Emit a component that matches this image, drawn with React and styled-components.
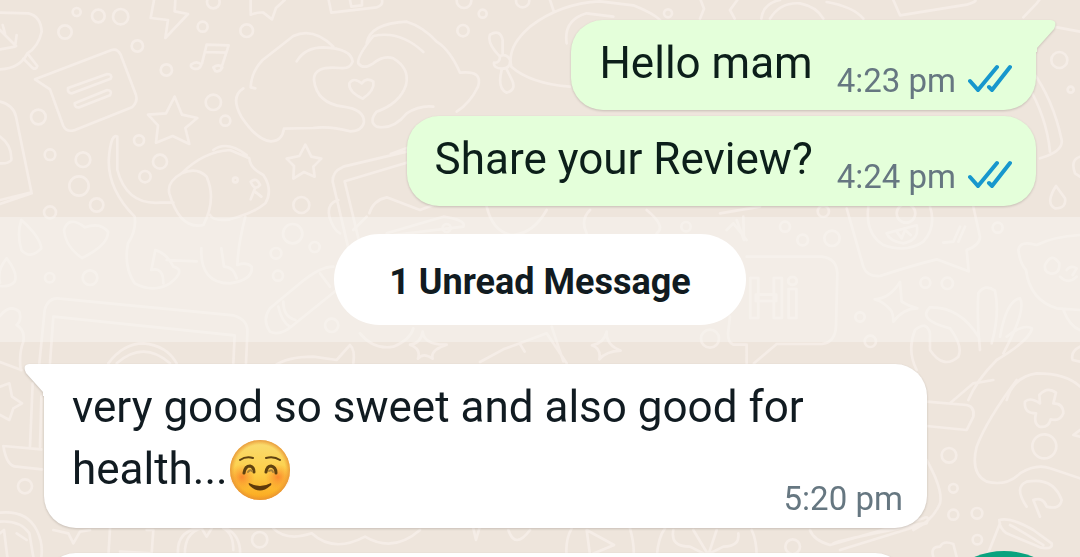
import styled, { createGlobalStyle, css } from 'styled-components';

const dots = [
  [230, 36, 12], [295, 48, 19], [362, 50, 23], [195, 96, 20], [412, 138, 17], [608, 80, 15],
  [740, 92, 19], [640, 6, 19], [499, 210, 17], [640, 307, 23], [676, 362, 15], [115, 351, 22],
  [417, 421, 15], [480, 485, 21], [435, 530, 17], [150, 464, 16], [249, 479, 22], [237, 558, 29],
  [290, 615, 20], [150, 637, 18], [904, 615, 24], [706, 540, 7], [1389, 92, 17], [1448, 41, 12],
  [1392, 2, 22], [1568, 2, 20], [2004, 40, 12], [3178, 180, 24], [3212, 269, 9], [2470, 634, 17],
  [878, 701, 29], [944, 741, 15], [828, 760, 16], [834, 827, 15], [149, 833, 14], [270, 833, 22],
  [995, 976, 20], [2355, 680, 15], [2408, 720, 16], [2496, 715, 23], [2993, 683, 15],
  [2776, 848, 15], [2842, 850, 17], [2580, 951, 14], [2611, 1024, 17], [75, 1459, 21],
  [2847, 1366, 22], [2860, 1465, 13], [2860, 1544, 15], [2931, 1540, 16], [2932, 1619, 14],
  [2378, 1640, 22], [779, 1619, 23], [3133, 1339, 36], [2130, 1016, 27], [1340, 684, 12],
  [2058, 680, 14], [2718, 640, 28],
];

const doodles = [
  // leaf, speech note, note card
  'M0 38 L85 40 Q122 48 125 95 Q115 140 82 160 Q60 205 0 208 M82 160 L112 198 Q108 210 98 204 L70 176 M0 90 L48 138 M8 75 L15 100 M50 105 L45 140 L0 148',
  'M105 238 L335 150 Q352 144 362 164 L408 285 Q414 306 396 322 L225 390 Q200 398 190 378 L150 268 Z M204 264 L322 222 Q338 222 332 236 L216 280 Q202 280 204 264 M224 310 L322 270 Q338 272 330 286 L238 322 Q224 324 224 310',
  'M0 305 Q40 315 48 350 L95 580 L0 612 M0 600 L92 578 M0 410 Q36 435 34 480 Q24 492 0 490',
  // lightning, notes, stars
  'M462 0 L452 54 L504 60 L496 114 L564 42 L524 34 L526 0',
  'M606 190 L620 134 L686 136 L664 204 M614 156 L678 158 M573 194 Q590 180 604 194 Q598 210 582 206 Q570 202 573 194 M640 202 Q656 190 667 202 Q660 218 646 213 Z',
  'M524 290 L546 344 L592 354 L556 384 L568 432 L518 408 L468 428 L474 376 L444 344 L498 340 Z',
  'M752 0 L752 44 Q776 36 790 38 L816 58 L828 24 L854 0',
  'M916 434 L934 470 L964 476 L940 500 L944 530 L912 516 L880 536 L882 498 L860 476 L898 468 Z',
  // hands holding a heart
  'M766 265 L752 262 Q754 215 788 180 L880 108 Q940 80 1000 140 M890 184 Q915 142 970 142 Q1054 145 1058 185 Q1050 208 1020 204 Q940 196 942 240 Q950 310 1030 320 Q1092 328 1092 366 Q1086 394 1050 394 Q990 378 940 384 L852 386 Q846 425 812 424 Q770 420 724 350 Q690 290 730 265',
  'M1100 130 Q1110 70 1220 65 Q1270 80 1310 125 Q1350 150 1380 218 Q1450 210 1434 260 Q1410 310 1370 335 M1270 156 Q1200 90 1120 108 Q1070 170 1075 190 Q1090 210 1120 190 Q1150 165 1180 175 Q1230 205 1218 255 Q1200 310 1130 335 Q1105 365 1130 380 Q1180 390 1220 340 Q1260 315 1300 320 M1085 250 Q1060 230 1048 250 Q1045 275 1088 296 Q1125 270 1120 245 Q1100 230 1085 250',
  'M986 0 L994 38 L1130 22 Q1150 15 1146 0 M1050 0 L1054 20 L1086 16 L1086 0',
  // balloon and whistle
  'M1710 260 Q1590 250 1534 200 Q1520 140 1590 80 Q1680 10 1800 4 L1900 16 Q1960 40 1980 60 M1700 130 Q1690 60 1760 40 L1840 50 M1650 0 L1662 36 M1500 168 Q1520 160 1530 180 Q1532 206 1506 206 Q1480 205 1482 188 Q1500 190 1500 168 M1500 170 Q1460 130 1470 104 Q1500 86 1508 120 L1508 166 M1506 206 Q1490 265 1520 278 Q1550 270 1536 240 L1518 204',
  'M2100 56 L2112 26 L2102 0 M2204 56 L2190 30 L2212 0 M2284 56 Q2290 10 2340 0 M2310 56 Q2340 6 2400 10 Q2450 20 2470 56 M2480 6 Q2560 20 2590 56 M2680 0 L2700 46 L2900 14 Q2930 5 2926 0 M3070 52 L3110 10 L3118 0',
  // dog
  'M352 410 Q335 400 328 460 Q315 560 404 650 Q410 690 384 730 Q370 800 404 850 Q460 880 510 850 Q560 810 520 800 Q500 760 466 750 L454 810 Q490 800 490 850 M352 410 L352 510 Q380 615 480 608 L520 608 M545 520 Q610 455 690 450 L748 475 Q750 505 790 525 Q820 570 796 610 Q760 640 690 658 Q640 665 630 645 M640 450 Q680 420 740 465 M545 520 Q500 545 508 580 Q540 690 610 675 Q650 600 620 530 Q590 500 545 520 M500 780 L590 784 M604 745 Q600 850 690 850 Q760 840 755 800 Q740 785 712 795 Q715 730 736 650 M664 745 L672 800 Q700 800 710 835 M752 545 Q770 530 780 555 Q765 575 752 545 M765 565 L752 598 M765 575 L784 590',
  // tablet
  'M1300 415 L1172 462 M1220 455 L1030 500 Q996 515 998 545 L1044 740 M1240 482 L1034 544 L1080 735 M1015 600 Q980 610 988 650 Q1000 690 1020 700 M1108 640 Q1120 600 1160 592 L1260 630 L1365 590',
  'M1060 690 L1100 650 M1160 700 L1330 650 Q1400 660 1390 680 L1180 705 M1460 620 Q1480 700 1540 705 Q1600 700 1640 630 M1760 700 Q1740 660 1770 630 M1940 630 Q2000 680 1970 700',
  // drops and heart
  'M64 660 Q50 700 64 750 Q90 780 124 745 Q120 710 64 660 M20 775 Q-10 810 0 848 M20 775 Q55 820 44 845 Q30 862 0 858',
  'M246 774 Q196 740 192 690 Q205 645 255 682 Q300 665 324 695 Q326 735 246 774',
  // laptop
  'M118 1090 L134 930 Q145 890 180 896 L700 946 Q746 960 742 1000 L738 1090 M150 1090 L160 950 L704 1006 L700 1090 M325 1090 Q370 1030 430 1030 Q500 1036 530 1090 M350 1090 Q430 1020 510 1090',
  'M0 948 Q30 910 58 935 Q66 960 50 975 Q76 990 70 1025 Q56 1060 62 1110 M0 1086 L64 1110',
  // pencil
  'M1000 800 Q960 800 900 850 L810 925 Q785 960 810 995 Q840 1010 880 975 L1010 870 M850 905 Q850 950 886 960 M835 920 Q845 965 870 980 M960 820 L990 860 M820 1100 Q860 1070 940 1070 L1010 1080 L1050 1035 Q1066 1050 1060 1090',
  // sparkles
  'M1080 1000 Q1120 1050 1180 1040 Q1230 1020 1240 985 M1268 995 Q1272 1036 1340 1034 Q1290 1050 1298 1076 Q1270 1056 1254 1076 Q1264 1046 1230 1034 Q1262 1030 1268 995 M1440 1086 L1510 1048 L1640 1000 L1700 1090 M1560 1032 L1574 1055 M1655 980 L1690 1084 M1820 995 Q1818 1036 1862 1052 Q1818 1054 1798 1078 Q1804 1046 1776 1036 Q1812 1030 1820 995',
  // chat bubble
  'M2240 770 L2465 770 Q2510 775 2512 820 L2508 980 Q2505 1028 2465 1032 L2330 1032 L2262 1090 M2240 1090 L2240 1034 L2200 1034 Q2184 1030 2184 1000 L2190 950',
  'M2180 690 L2200 670 L2240 720 M2160 640 L2280 620 M2210 660 L2232 720 L2230 650',
  // laughing note
  'M2540 625 L2590 800 Q2600 830 2640 828 Q2740 795 2810 778 L2906 814 L2900 750 Q2940 735 2940 710 L2920 620 M2605 620 Q2595 700 2650 735 Q2720 760 2770 725 Q2810 680 2790 620 M2660 700 L2750 676 Q2760 720 2710 730 Q2670 725 2660 700 M2690 695 L2705 715 L2715 690 L2732 705 M2880 680 L2860 725 L2830 728 M2895 680 L2875 725',
  'M2700 846 L2705 905 Q2725 918 2752 925 Q2710 925 2680 965 Q2680 940 2672 930 Q2650 905 2624 898 Q2670 895 2700 846',
  // plant
  'M2940 1050 Q2930 960 2935 880 Q2955 850 2985 872 Q3000 940 2975 1030 M3000 1010 Q3020 900 3060 895 Q3080 930 3010 1060 M3020 1010 Q3070 970 3096 985 Q3090 1020 2990 1080 Q2930 1140 2905 1200 M2935 1010 Q2880 920 2790 922 Q2750 960 2850 985 Q2890 1040 2875 1070 Q2830 1110 2790 1050 L2790 1000 Q2780 960 2745 990 Q2720 1050 2750 1110',
  // bear
  'M3240 705 Q3160 710 3110 735 Q3060 720 3055 750 Q3060 790 3078 810 Q3090 900 3170 925 L3240 930 M3135 795 Q3155 755 3178 790 Q3180 825 3150 820 Q3132 815 3135 795 M3200 810 Q3212 795 3230 805 L3218 825 M3180 830 Q3205 855 3230 830 M3190 930 Q3210 980 3240 990 M3240 1040 Q3210 1055 3218 1080 L3240 1085',
  // gamepad
  'M3020 1200 Q3040 1130 3110 1120 Q3200 1120 3240 1160',
  'M3050 1140 Q2960 1260 2930 1340 Q2910 1420 2960 1445 Q3020 1460 3060 1420 Q3110 1390 3150 1405 L3240 1435 M3118 1185 Q3142 1158 3168 1178 L3160 1210 Q3190 1210 3190 1240 Q3180 1266 3152 1258 Q3145 1285 3118 1280 Q3100 1270 3108 1240 Q3070 1240 3075 1205 Q3090 1190 3120 1210 Z M3240 1290 L3220 1305 L3240 1310',
  'M2780 1205 L2900 1215 Q2925 1220 2920 1250 L2900 1290 L2780 1278 M2850 1210 L2920 1150 L2980 1140',
  'M2780 1380 Q2830 1470 2820 1510 Q2800 1560 2740 1590 M2430 1590 Q2440 1620 2490 1635 L2770 1555 Q2790 1545 2780 1570 L2520 1650 M2500 1630 Q2520 1620 2770 1570',
  // microphone and rope
  'M3080 1520 Q3040 1460 3080 1445 Q3160 1430 3185 1500 Q3180 1530 3140 1520 Q3130 1490 3100 1500 L3120 1550 M2998 1560 Q3030 1550 3100 1590 L3155 1630 Q3160 1650 3120 1642 L3020 1600 Q2998 1585 2998 1560 M3000 1570 L2960 1671 M3030 1575 Q3060 1590 3130 1635',
  'M2800 1671 Q2790 1640 2820 1640 Q2830 1620 2860 1632 L2870 1671',
  // left edge shapes
  'M0 1160 L28 1150 L36 1190 L66 1210 L40 1225 L28 1260 L0 1245 M98 1150 L90 1340 M124 1190 L120 1340 M10 1338 L124 1348 M10 1338 Q20 1400 50 1400 L126 1408',
  'M0 1538 Q80 1530 110 1590 Q130 1630 124 1671 M0 1565 Q60 1560 88 1600 L100 1671 M0 1600 L12 1590 L22 1671 M50 1600 L80 1620',
  'M160 1590 L205 1600 L220 1630 L240 1595 L270 1590 M330 1585 L325 1671 M440 1590 L460 1590 L455 1660 L360 1655 M535 1671 Q525 1600 590 1585 M720 1671 Q725 1610 680 1585 M555 1671 Q550 1600 605 1585 L620 1610 L635 1585 M700 1650 Q700 1600 670 1585',
  'M820 1585 Q860 1625 935 1600 Q1000 1660 1095 1610 Q1180 1660 1260 1590 M1420 1585 L1428 1620 L1438 1585 M1525 1590 Q1545 1650 1590 1590 M1700 1671 Q1695 1620 1715 1585 M1760 1590 L1842 1635 L1770 1665 Z M1890 1585 Q1905 1640 1900 1671 M1970 1671 Q1975 1610 1995 1585 M2020 1590 Q2010 1640 2070 1640 L2120 1665 L2170 1640 Q2220 1640 2215 1600 M2080 1590 L2125 1665 L2150 1590 M2270 1671 Q2270 1620 2255 1590',
  // right edge
  'M3070 85 L3160 80 L3240 95 M3095 210 Q3160 300 3185 420 Q3190 455 3120 475 M3080 250 Q3140 350 3150 455 M3240 470 Q3210 480 3225 520 L3240 530 M3168 558 Q3135 610 3165 625 Q3200 625 3195 595 Z',
];

const Wallpaper = () => (
  <Pattern viewBox='0 0 3240 1671' preserveAspectRatio='xMinYMin slice' aria-hidden='true'>
    {dots.map(([cx, cy, r]) => (
      <circle key={`${cx}-${cy}`} cx={cx} cy={cy} r={r} />
    ))}
    {doodles.map((d) => (
      <path key={d} d={d} />
    ))}
    <text x='2240' y='954'>
      Hi
    </text>
  </Pattern>
);

const Tail = ({ side }) => (
  <TailIcon $side={side} viewBox='0 0 22 32' aria-hidden='true'>
    <path d='M0 0 H16 Q23 1 19 9 L2 28 V32 H0 Z' />
  </TailIcon>
);

const ReadTicks = () => (
  <Ticks viewBox='0 0 44 28' role='img' aria-label='Read'>
    <path d='M2 17 L10 26 L29 3 M21 23 L24 26 L42 3' />
  </Ticks>
);

const Smile = () => (
  <Emoji viewBox='0 0 60 60' role='img' aria-label='Smiling face'>
    <defs>
      <linearGradient id='face' x1='0' y1='0' x2='0' y2='1'>
        <stop offset='0' stopColor='#f9dc72' />
        <stop offset='0.55' stopColor='#fdcf48' />
        <stop offset='1' stopColor='#fba71c' />
      </linearGradient>
      <radialGradient id='rim'>
        <stop offset='0.84' stopColor='#ee9a2c' stopOpacity='0' />
        <stop offset='1' stopColor='#e58f38' stopOpacity='0.85' />
      </radialGradient>
      <radialGradient id='blush'>
        <stop offset='0' stopColor='#f9742a' stopOpacity='0.75' />
        <stop offset='1' stopColor='#fb8c2a' stopOpacity='0' />
      </radialGradient>
    </defs>
    <circle cx='30' cy='30' r='30' fill='url(#face)' />
    <circle cx='12' cy='37' r='13' fill='url(#blush)' />
    <circle cx='48' cy='37' r='13' fill='url(#blush)' />
    <circle cx='30' cy='30' r='30' fill='url(#rim)' />
    <g fill='none' stroke='#5f4210' strokeLinecap='round'>
      <path d='M10 20 Q16 16 23 18 M36 18 Q44 16 50 20' strokeWidth='2' />
      <path d='M14 33 Q15 26 20 26 Q24 27 24 32 M36 32 Q37 26 41 26 Q46 27 46 33' strokeWidth='3' />
      <path d='M18 32 Q20 29 22 31 M39 31 Q42 29 43 32' stroke='#a88238' strokeWidth='2' />
    </g>
    <path d='M19 43 Q30 49 41 43 Q42 45 40 46 Q30 55 20 46 Q18 44 19 43' fill='#5f3a0a' />
  </Emoji>
);

const Message = ({ side, tail, time, read, children }) => (
  <Bubble $side={side} $tail={tail}>
    {tail && <Tail side={side} />}
    <Text>{children}</Text>
    <Meta>
      <time>{time}</time>
      {read && <ReadTicks />}
    </Meta>
  </Bubble>
);

const App = () => {
  return (
    <Chat>
      <GlobalStyle />
      <Wallpaper />
      <Group>
        <Message side='out' tail time='4:23 pm' read>
          Hello mam
        </Message>
        <Message side='out' time='4:24 pm' read>
          Share your Review?
        </Message>
      </Group>
      <UnreadBand>
        <UnreadPill>1 Unread Message</UnreadPill>
      </UnreadBand>
      <Group>
        <Message side='in' tail time='5:20 pm'>
          very good so sweet and also good for health...
          <Smile />
        </Message>
      </Group>
      <Group>
        <NextBubble $side='in' />
      </Group>
      <ScrollButton type='button' aria-label='Scroll to latest' />
    </Chat>
  );
};

export default App;

// Styling

const GlobalStyle = createGlobalStyle`
  * {
    box-sizing: border-box;
  }

  body {
    margin: 0;
    background-color: #eee5dc;
    font-family: Roboto, sans-serif;
  }
`;

const Chat = styled.main`
  position: relative;
  display: flex;
  flex-direction: column;
  height: 100vh;
  padding-top: 20px;
  overflow: hidden;
`;

const Pattern = styled.svg`
  position: absolute;
  inset: 0;
  z-index: -1;
  width: 100%;
  height: 100%;
  fill: none;
  stroke: #f5ede7;
  stroke-width: 8px;
  stroke-linecap: round;
  stroke-linejoin: round;

  text {
    font-size: 164px;
    font-weight: 700;
  }
`;

const Group = styled.section`
  display: flex;
  flex-direction: column;
  flex-shrink: 0;
  gap: 6px;
  padding: 0 44px;
  margin-bottom: 25px;

  &:first-of-type {
    margin-bottom: 11px;
  }
`;

const Bubble = styled.article`
  position: relative;
  display: flex;
  flex-wrap: wrap;
  justify-content: flex-end;
  align-items: flex-end;
  column-gap: 24px;
  max-width: 89%;
  padding: 12px 24px 10px 28px;
  border-radius: 32px;
  filter: drop-shadow(0 1px 1px rgba(60, 50, 40, 0.22));

  ${({ $side }) =>
    $side === 'out'
      ? css`
          align-self: flex-end;
          color: #0c1f1a;
          background-color: #e4ffda;
          fill: #e4ffda;
        `
      : css`
          align-self: flex-start;
          color: #111b21;
          background-color: #fff;
          fill: #fff;
        `}

  ${({ $tail, $side }) =>
    $tail && ($side === 'out' ? 'border-top-right-radius: 0;' : 'border-top-left-radius: 0;')}
`;

const NextBubble = styled(Bubble)`
  width: 87%;
  min-height: 90px;
`;

const TailIcon = styled.svg`
  position: absolute;
  top: 0;
  width: 22px;
  height: 32px;

  ${({ $side }) =>
    $side === 'out'
      ? 'left: calc(100% - 1px);'
      : 'right: calc(100% - 1px); transform: scaleX(-1);'}
`;

const Text = styled.p`
  margin: 0 0 6px;
  font-size: 44px;
  line-height: 62px;
`;

const Meta = styled.footer`
  display: flex;
  align-items: baseline;
  gap: 12px;
  margin-top: -26px;
  color: #667781;
  font-size: 33px;
  line-height: 38px;
  white-space: nowrap;
`;

const Ticks = styled.svg`
  width: 44px;
  height: 28px;
  fill: none;
  stroke: #1797cd;
  stroke-width: 4px;
  stroke-linecap: round;
`;

const Emoji = styled.svg`
  width: 60px;
  height: 60px;
  margin-left: 2px;
  vertical-align: -16px;
`;

const UnreadBand = styled.div`
  display: flex;
  justify-content: center;
  flex-shrink: 0;
  padding: 17px 0;
  margin-bottom: 22px;
  background-color: rgba(247, 245, 242, 0.5);
`;

const UnreadPill = styled.h2`
  margin: 0;
  padding: 27px 55px 21px;
  border-radius: 46px;
  color: #111b21;
  background-color: #fff;
  font-size: 36px;
  font-weight: 700;
  line-height: 43px;
`;

const ScrollButton = styled.button`
  position: absolute;
  right: 0;
  top: calc(100% - 6px);
  width: 152px;
  height: 152px;
  border: none;
  border-radius: 50%;
  background-color: #0aa37f;
  cursor: pointer;
`;
